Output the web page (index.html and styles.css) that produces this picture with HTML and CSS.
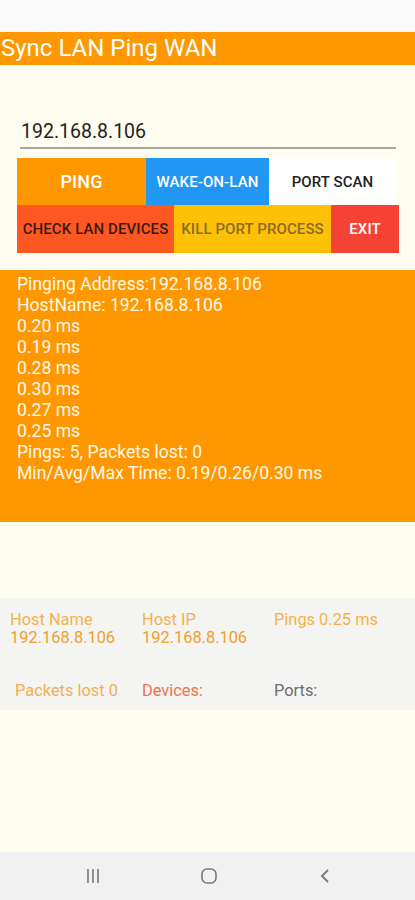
FILE: index.html
```html
<!DOCTYPE html>
<html>
<head>
<meta charset="utf-8">
<link rel="stylesheet" href="styles.css">
</head>
<body>
<div class="screen">
  <div class="status"></div>
  <div class="titlebar">Sync LAN Ping WAN</div>
  <div class="form">
    <div class="input">192.168.8.106</div>
    <div class="row row1">
      <div class="btn ping">PING</div>
      <div class="btn wol">WAKE-ON-LAN</div>
      <div class="btn scan">PORT SCAN</div>
    </div>
    <div class="row row2">
      <div class="btn check">CHECK LAN DEVICES</div>
      <div class="btn kill">KILL PORT PROCESS</div>
      <div class="btn exit">EXIT</div>
    </div>
  </div>
  <div class="output">
    <div>Pinging Address:192.168.8.106</div>
    <div>HostName: 192.168.8.106</div>
    <div>0.20 ms</div>
    <div>0.19 ms</div>
    <div>0.28 ms</div>
    <div>0.30 ms</div>
    <div>0.27 ms</div>
    <div>0.25 ms</div>
    <div>Pings: 5, Packets lost: 0</div>
    <div>Min/Avg/Max Time: 0.19/0.26/0.30 ms</div>
  </div>
  <div class="spacer"></div>
  <div class="stats">
    <div class="cell"><div class="lbl">Host Name</div><div class="val">192.168.8.106</div></div>
    <div class="cell"><div class="lbl">Host IP</div><div class="val">192.168.8.106</div></div>
    <div class="cell"><div class="lbl">Pings 0.25 ms</div></div>
    <div class="cell low packets">Packets lost 0</div>
    <div class="cell low devices">Devices:</div>
    <div class="cell low ports">Ports:</div>
  </div>
  <div class="fill"></div>
  <div class="navbar">
    <svg class="nav" width="20" height="20" viewBox="0 0 20 20"><g stroke="#777" stroke-width="1.6" fill="none"><line x1="5" y1="3" x2="5" y2="17"/><line x1="10" y1="3" x2="10" y2="17"/><line x1="15" y1="3" x2="15" y2="17"/></g></svg>
    <svg class="nav" width="20" height="20" viewBox="0 0 20 20"><rect x="3" y="3" width="14" height="14" rx="5" stroke="#777" stroke-width="1.6" fill="none"/></svg>
    <svg class="nav" width="20" height="20" viewBox="0 0 20 20"><polyline points="13,4 7,10 13,16" stroke="#777" stroke-width="1.8" fill="none"/></svg>
  </div>
</div>
</body>
</html>
```

FILE: styles.css
```css
html, body {
  margin: 0;
  padding: 0;
}
body {
  font-family: Roboto, "Liberation Sans", sans-serif;
  background: #fffdf0;
}
.screen {
  width: 415px;
  height: 900px;
  display: flex;
  flex-direction: column;
  background: #fffdf0;
}
.status {
  height: 32px;
  background: #fafafa;
}
.titlebar {
  height: 33px;
  background: #ff9800;
  color: #fff;
  font-size: 24px;
  line-height: 33px;
  padding-left: 1px;
}
.form {
  padding: 52px 16px 0 17px;
}
.input {
  margin: 0 3px 0 3px;
  height: 30px;
  border-bottom: 2px solid #aaa89c;
  font-size: 19.5px;
  line-height: 30px;
  color: #222;
  padding-left: 1px;
}
.row1 {
  margin-top: 9px;
}
.row {
  display: flex;
}
.btn {
  display: flex;
  align-items: center;
  justify-content: center;
  font-size: 15px;
  font-weight: 500;
  letter-spacing: 0.1px;
}
.row1 .btn { height: 47px; }
.row2 .btn { height: 48px; }
.ping { width: 129px; background: #ff9800; color: #fff; font-size: 18px; }
.wol { width: 123px; background: #2196f3; color: #fff; }
.scan { width: 127px; background: #fff; color: #222; }
.check { width: 157px; background: #ff5722; color: #3a1a10; }
.kill { width: 157px; background: #ffc107; color: #8a6a2a; }
.exit { width: 68px; background: #f44336; color: #fff; }
.output {
  margin-top: 17px;
  height: 252px;
  background: #ff9800;
  color: #fff8ea;
  font-size: 17.6px;
  line-height: 21px;
  padding: 4px 0 0 17px;
  box-sizing: border-box;
}
.spacer {
  height: 76px;
}
.stats {
  height: 112px;
  background: #f4f4f2;
  display: grid;
  grid-template-columns: 132px 132px 1fr;
  grid-template-rows: 58px 1fr;
  padding: 13px 0 0 10px;
  box-sizing: border-box;
  font-size: 16.4px;
  line-height: 18px;
}
.lbl { color: #f4b24c; }
.val { color: #f0a030; }
.cell.low {
  align-self: start;
  padding-top: 13px;
}
.packets { color: #f2b050; padding-left: 5px; }
.devices { color: #ee7548; }
.ports { color: #6d6d6d; }
.fill {
  flex: 1;
}
.navbar {
  height: 48px;
  background: #f1f1f1;
  display: flex;
  align-items: center;
  padding-left: 83px;
  gap: 96px;
}
.nav { display: block; }
```
